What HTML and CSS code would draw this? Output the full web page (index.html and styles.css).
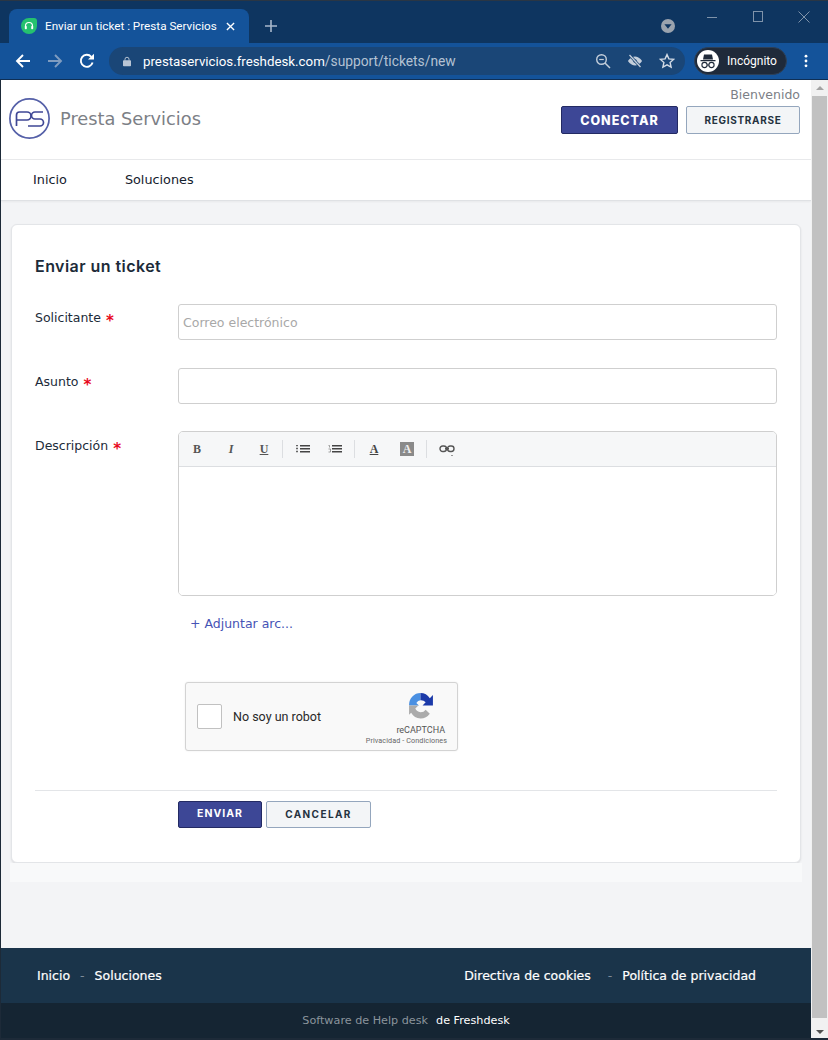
FILE: index.html
```html
<!DOCTYPE html>
<html lang="es">
<head>
<meta charset="utf-8">
<title>Enviar un ticket : Presta Servicios</title>
<link rel="stylesheet" href="styles.css">
</head>
<body>
<div class="window">
  <div class="titlebar">
    <div class="tab">
      <svg class="favicon" viewBox="0 0 16 16"><path d="M8 0h5a3 3 0 0 1 3 3v5a8 8 0 0 1-16 0 8 8 0 0 1 8-8z" fill="#25c16f"/><path d="M4.500 9V8a3.500 3.500 0 0 1 7 0v1" fill="none" stroke="#fff" stroke-width="1.200"/><rect x="3.800" y="8" width="2" height="3.200" rx=".8" fill="#fff"/><rect x="10.200" y="8" width="2" height="3.200" rx=".8" fill="#fff"/></svg>
      <span class="tab-title">Enviar un ticket : Presta Servicios</span>
      <svg class="tab-close" viewBox="0 0 10 10"><path d="M1 1l8 8M9 1l-8 8" stroke="#fff" stroke-width="1.500"/></svg>
    </div>
    <svg class="newtab" viewBox="0 0 12 12"><path d="M6 0v12M0 6h12" stroke="#a9b8cb" stroke-width="1.600"/></svg>
    <div class="spacer"></div>
    <svg class="tabsearch" viewBox="0 0 14 14"><circle cx="7" cy="7" r="7" fill="#9aa3ae"/><path d="M3.400 5.300h7.200L7 9.800z" fill="#0e3560"/></svg>
    <div class="winbtns">
      <svg viewBox="0 0 12 12"><path d="M1 6.500h10" stroke="#7f93aa" stroke-width="1"/></svg>
      <svg viewBox="0 0 12 12"><rect x="1.500" y=".5" width="9" height="10" fill="none" stroke="#7f93aa"/></svg>
      <svg viewBox="0 0 12 12"><path d="M.5 .5l11 11M11.500 .5l-11 11" stroke="#7f93aa"/></svg>
    </div>
  </div>
  <div class="toolbar">
    <svg class="navicon first" viewBox="0 0 16 16"><path d="M15 8H2M8 2L2 8l6 6" fill="none" stroke="#fff" stroke-width="1.900"/></svg>
    <svg class="navicon" viewBox="0 0 16 16"><path d="M1 8h13M8 2l6 6-6 6" fill="none" stroke="#7f9cc0" stroke-width="1.900"/></svg>
    <svg class="navicon" viewBox="0 0 16 16"><path d="M13.600 9.500A6 6 0 1 1 12.300 3.800" fill="none" stroke="#fff" stroke-width="1.900"/><path d="M9 6.500h6V.8z" fill="#fff"/></svg>
    <div class="omnibox">
      <svg class="lock" viewBox="0 0 10 12"><rect y="4.500" width="10" height="7.500" rx="1" fill="#b9c5d4"/><path d="M2.500 5V3.200a2.500 2.500 0 0 1 5 0V5" fill="none" stroke="#b9c5d4" stroke-width="1.200"/></svg>
      <span class="url"><span class="host">prestaservicios.freshdesk.com</span><span class="path">/support/tickets/new</span></span>
      <div class="spacer"></div>
      <svg class="omni-icon" viewBox="0 0 16 16"><circle cx="6.500" cy="6.500" r="4.800" fill="none" stroke="#c3cedb" stroke-width="1.400"/><path d="M10 10l5 5" stroke="#c3cedb" stroke-width="1.500"/><path d="M4.200 6.500h4.600" stroke="#c3cedb" stroke-width="1.200"/></svg>
      <svg class="omni-icon" viewBox="0 0 16 16"><path d="M1 8s2.600-4.500 7-4.500S15 8 15 8s-2.600 4.500-7 4.500S1 8 1 8z" fill="#c3cedb"/><circle cx="8" cy="8" r="1.800" fill="#1a4677"/><path d="M2.500 2l11 12" stroke="#1a4677" stroke-width="2.600"/><path d="M2.500 2l11 12" stroke="#c3cedb" stroke-width="1.300"/></svg>
      <svg class="omni-icon" viewBox="0 0 16 16"><path d="M8 1.600l1.900 4.300 4.700.5-3.500 3.100 1 4.600L8 11.800l-4.100 2.300 1-4.600L1.400 6.400l4.700-.5z" fill="none" stroke="#d3dbe5" stroke-width="1.400"/></svg>
    </div>
    <div class="incognito">
      <span class="inc-badge"><svg viewBox="0 0 20 20"><path d="M2.500 9h15v1.200h-15zM6 3.500h8l1 5H5z" fill="#1f2a3a"/><circle cx="6.500" cy="14" r="2.600" fill="none" stroke="#1f2a3a" stroke-width="1.100"/><circle cx="13.500" cy="14" r="2.600" fill="none" stroke="#1f2a3a" stroke-width="1.100"/><path d="M9 14h2" stroke="#1f2a3a"/></svg></span>
      <span class="inc-label">Incógnito</span>
    </div>
    <svg class="kebab" viewBox="0 0 4 16"><circle cx="2" cy="2.500" r="1.600" fill="#fff"/><circle cx="2" cy="8" r="1.600" fill="#fff"/><circle cx="2" cy="13.500" r="1.600" fill="#fff"/></svg>
  </div>
  <div class="viewport">
    <div class="page">
      <header class="site-header">
        <div class="brand">
          <svg class="logo" viewBox="0 0 41 41"><circle cx="20.500" cy="20.500" r="19.600" fill="none" stroke="#5560a8" stroke-width="1.700"/><path d="M7.500 28V17a3 3 0 0 1 3-3H18a4 4 0 0 1 0 8H8" fill="none" stroke="#3f4795" stroke-width="1.700"/><path d="M34 14H26a3.500 3.500 0 0 0 0 7h5a3.500 3.500 0 0 1 0 7H19" fill="none" stroke="#3f4795" stroke-width="1.700"/></svg>
          <span class="brand-name">Presta Servicios</span>
        </div>
        <div class="auth">
          <div class="welcome">Bienvenido</div>
          <div class="auth-btns">
            <a class="btn btn-primary btn-connect">CONECTAR</a>
            <a class="btn btn-secondary btn-register">REGISTRARSE</a>
          </div>
        </div>
      </header>
      <nav class="site-nav"><a>Inicio</a><a>Soluciones</a></nav>
      <main class="main">
        <section class="card">
          <h1 class="card-title">Enviar un ticket</h1>
          <form class="form">
            <label class="label">Solicitante <span class="req">*</span></label>
            <div class="input placeholder">Correo electrónico</div>
            <label class="label">Asunto <span class="req">*</span></label>
            <div class="input"></div>
            <label class="label">Descripción <span class="req">*</span></label>
            <div class="editor">
              <div class="editor-bar">
                <span class="tool tool-b">B</span>
                <span class="tool tool-i">I</span>
                <span class="tool tool-u">U</span>
                <span class="sep"></span>
                <svg class="tool-svg tool-list" viewBox="0 0 14 8"><path d="M0 .5h2M0 3.500h2M0 6.500h2" stroke="#666" stroke-width="1.500"/><path d="M4 .8h10M4 3.800h10M4 6.800h10" stroke="#444" stroke-width="1.500"/></svg>
                <svg class="tool-svg" viewBox="0 0 14 8"><path d="M.5 .5h1v2M.5 4h2v3h-2" stroke="#777" stroke-width=".7" fill="none"/><path d="M4 .8h10M4 3.800h10M4 6.800h10" stroke="#444" stroke-width="1.500"/></svg>
                <span class="sep"></span>
                <span class="tool tool-a">A</span>
                <span class="tool tool-bg">A</span>
                <span class="sep"></span>
                <svg class="tool-link" viewBox="0 0 16 12"><rect x="1" y="1" width="6.500" height="5.500" rx="2.700" fill="none" stroke="#555" stroke-width="1.400"/><rect x="8.500" y="1" width="6.500" height="5.500" rx="2.700" fill="none" stroke="#555" stroke-width="1.400"/><path d="M6 3.750h4" stroke="#555" stroke-width="1.400"/><path d="M12 10.500h2" stroke="#999"/></svg>
              </div>
              <div class="editor-body"></div>
            </div>
            <a class="attach">+ Adjuntar arc...</a>
            <div class="recaptcha">
              <span class="rc-box"></span>
              <span class="rc-text">No soy un robot</span>
              <div class="rc-side">
                <svg class="rc-logo" viewBox="2 1 25 27"><path d="M3 13A11 11 0 0 1 14 2V9A5 5 0 0 0 10 11.500L12.500 14H3Z" fill="#4a90e2"/><path d="M14 2A11 11 0 0 1 23 7L26 4V14H16L19 11A6 6 0 0 0 14 9Z" fill="#1c3aa9"/><path d="M3 14H12L9 17A6 6 0 0 0 14 20.500A6 6 0 0 0 19 18L23 22A11 11 0 0 1 14 26.500A11 11 0 0 1 5 21L3 23Z" fill="#ababab"/></svg>
                <span class="rc-brand">reCAPTCHA</span>
                <span class="rc-links">Privacidad - Condiciones</span>
              </div>
            </div>
            <div class="actions">
              <a class="btn btn-primary btn-send">ENVIAR</a>
              <a class="btn btn-secondary btn-cancel">CANCELAR</a>
            </div>
          </form>
        </section>
        <div class="card-shadow"></div>
      </main>
      <footer class="footer">
        <div class="footer-top">
          <div class="footer-links"><a>Inicio</a><span class="dash">-</span><a>Soluciones</a></div>
          <div class="footer-links footer-legal"><a>Directiva de cookies</a><span class="dash">-</span><a>Política de privacidad</a></div>
        </div>
        <div class="footer-bottom"><span class="muted">Software de Help desk</span><span>de Freshdesk</span></div>
      </footer>
    </div>
    <div class="scrollbar">
      <span class="arrow up"></span>
      <span class="thumb"></span>
      <span class="arrow down"></span>
    </div>
  </div>
</div>
</body>
</html>
```

FILE: styles.css
```css
* { box-sizing: border-box; }
html, body { margin: 0; height: 100%; }
body { font-family: "DejaVu Sans", sans-serif; overflow: hidden; background: #0c3461; }
.window { width: 828px; height: 1040px; display: flex; flex-direction: column; border-bottom: 2px solid #1d2a38; overflow: hidden; }
.spacer { flex: 1; }

.titlebar { height: 43px; flex: none; background: #0e3560; border-top: 1px solid #2a3644; display: flex; align-items: flex-start; padding-left: 9px; }
.tab { width: 240px; height: 34px; margin-top: 8px; background: #14539a; border-radius: 8px 8px 0 0; display: flex; align-items: center; padding: 0 12px; gap: 8px; }
.favicon { width: 16px; height: 16px; flex: none; }
.tab-title { font: 11.700px "Roboto", sans-serif; color: #fff; white-space: nowrap; flex: 1; }
.tab-close { width: 9px; height: 9px; flex: none; margin-right: 2px; }
.newtab { width: 12px; height: 12px; margin: 19px 0 0 16px; }
.tabsearch { width: 14px; height: 14px; margin: 18px 0 0; }
.winbtns { display: flex; margin: 10px 18px 0 31px; gap: 34px; }
.winbtns svg { width: 12px; height: 12px; }

.toolbar { height: 37px; flex: none; background: #14539a; display: flex; align-items: center; padding-left: 15px; border-bottom: 1px solid #0f2f55; }
.navicon { width: 16px; height: 16px; margin-right: 16px; flex: none; }
.omnibox { width: 576px; height: 28px; margin-left: -2px; background: #1a4677; border-radius: 14px; display: flex; align-items: center; padding: 0 10px 0 14px; }
.lock { width: 8px; height: 11px; flex: none; }
.url { font: 13.300px "Roboto", sans-serif; margin-left: 12px; white-space: nowrap; }
.host { color: #fff; }
.path { color: #b4c2d3; font-size: 13.800px; }
.omni-icon { width: 16px; height: 16px; margin-left: 16px; flex: none; }
.incognito { width: 93px; height: 28px; margin-left: 9px; background: #1f2a3a; border: 1px solid #2d4058; border-radius: 14px; display: flex; align-items: center; padding-left: 2px; gap: 8px; flex: none; }
.inc-badge { width: 22px; height: 22px; border-radius: 50%; background: #fff; display: flex; align-items: center; justify-content: center; flex: none; }
.inc-badge svg { width: 20px; height: 20px; }
.inc-label { font: 12px "Roboto", sans-serif; color: #fff; }
.kebab { width: 4px; height: 14px; margin-left: 17px; flex: none; }

.viewport { flex: 1; min-height: 0; display: flex; border-left: 1px solid #1d2a38; }
.page { flex: 1; min-width: 0; display: flex; flex-direction: column; background: #f3f4f6; }
.scrollbar { width: 17px; flex: none; background: #f1f1f1; display: flex; flex-direction: column; align-items: center; }
.arrow { width: 0; height: 0; border-left: 4px solid transparent; border-right: 4px solid transparent; flex: none; }
.arrow.up { border-bottom: 4px solid #a3a3a3; margin: 6px 0; }
.arrow.down { border-top: 4px solid #505050; margin: 12px 0 4px; }
.thumb { width: 15px; flex: 1; background: #c1c1c1; }

.site-header { height: 80px; flex: none; background: #fff; border-bottom: 1px solid #e8e9eb; display: flex; justify-content: space-between; padding: 0 11px 3px 8px; }
.brand { display: flex; align-items: center; gap: 10px; }
.logo { width: 41px; height: 41px; flex: none; }
.brand-name { font: 17.800px "DejaVu Sans", sans-serif; color: #7c8086; }
.auth { display: flex; flex-direction: column; align-items: flex-end; padding-top: 6px; }
.welcome { font-size: 12.500px; line-height: 18px; color: #7c8086; }
.auth-btns { display: flex; gap: 8px; margin-top: 2px; }
.btn { display: flex; align-items: center; justify-content: center; border-radius: 2px; font-family: "Inter", sans-serif; font-weight: 800; white-space: nowrap; }
.btn-primary { background: #3d4796; border: 1px solid #232a63; color: #fff; }
.btn-secondary { background: #f3f5f7; border: 1px solid #94a6bd; color: #25323f; }
.btn-connect { width: 117px; height: 28px; font-size: 12.500px; letter-spacing: 1px; }
.btn-register { width: 114px; height: 28px; font-size: 10px; letter-spacing: .7px; font-weight: 700; }
.btn-send { width: 84px; height: 27px; padding-bottom: 2px; font-size: 10.500px; letter-spacing: 1px; font-weight: 700; }
.btn-cancel { width: 105px; height: 27px; padding-bottom: 2px; font-size: 10px; letter-spacing: 1.400px; font-weight: 700; }

.site-nav { height: 41px; flex: none; background: #fff; border-bottom: 1px solid #dfe1e4; box-shadow: 0 1px 2px rgba(0,0,0,.05); display: flex; align-items: center; padding: 0 0 2px 32px; gap: 58px; font-size: 12.800px; color: #14202c; }

.main { flex: 1; padding: 23px 10px 0 9px; display: flex; flex-direction: column; }
.card { height: 639px; flex: none; background: #fff; border: 1px solid #e3e5e8; border-radius: 6px; box-shadow: 0 1px 2px rgba(0,0,0,.1); margin: 0 0 0 1px; padding: 31px 24px 0 23px; }
.card-shadow { height: 19px; background: #f8f9fa; margin: 0 -1px 0 0; flex: none; }
.card-title { margin: 0; font: 600 16px/20px "Inter", sans-serif; letter-spacing: .45px; color: #1c2b39; }
.form { display: grid; grid-template-columns: 143px 599px; margin-top: 28px; align-items: start; }
.label { font-size: 12.500px; line-height: 18px; color: #1c2b39; padding-top: 5px; }
.req { color: #e8091e; font-size: 15px; font-weight: 700; line-height: 10px; margin-left: 1px; vertical-align: -4px; }
.input { height: 36px; border: 1px solid #cfcfcf; border-radius: 3px; background: #fff; margin-bottom: 28px; padding: 0 4px; display: flex; align-items: center; font-size: 12.500px; }
.placeholder { color: #a8a8a8; }
.editor { grid-column: 2; height: 165px; border: 1px solid #cfcfcf; border-radius: 5px; overflow: hidden; margin-top: -1px; display: flex; flex-direction: column; }
.editor-bar { height: 35px; flex: none; background: #f6f7f8; border-bottom: 1px solid #dcdee1; display: flex; align-items: center; padding-left: 13px; }
.tool { width: 10px; font-family: "Liberation Serif", serif; font-size: 12px; font-weight: 700; color: #555; line-height: 14px; text-align: center; margin-right: 24px; }
.tool-i { font-style: italic; margin-right: 23px; }
.tool-u { text-decoration: underline; margin-right: 13px; }
.sep { width: 1px; height: 18px; background: #dcdee1; margin-right: 14px; }
.tool-svg { width: 14px; height: 8px; margin-right: 12px; }
.tool-list { margin-right: 18px; margin-left: -1px; }
.tool-a { text-decoration: underline; color: #444; margin-right: 21px; }
.tool-bg { width: 14px; background: #8a8a8a; color: #eee; margin-right: 12px; }
.tool-link { width: 16px; height: 12px; margin: 4px 0 0 -2px; }
.editor-body { flex: 1; background: #fff; }
.attach { grid-column: 2; margin: 19px 0 0 12px; font-size: 12.500px; line-height: 18px; color: #4653b5; }
.recaptcha { grid-column: 2; margin: 49px 0 0 7px; width: 273px; height: 69px; background: #f9f9f9; border: 1px solid #d3d3d3; border-radius: 3px; box-shadow: 0 0 2px rgba(0,0,0,.08); display: flex; align-items: center; padding-left: 11px; }
.rc-box { width: 25px; height: 25px; background: #fff; border: 1px solid #c1c1c1; border-radius: 2px; flex: none; }
.rc-text { font: 12.500px "Roboto", sans-serif; color: #282828; margin-left: 11px; }
.rc-side { margin-left: auto; margin-right: 10px; display: flex; flex-direction: column; align-items: flex-end; align-self: flex-start; padding-top: 9px; }
.rc-logo { width: 28px; height: 28px; margin-right: 12px; }
.rc-brand { font: 9px/11px "Roboto", sans-serif; color: #555; margin-top: 5px; margin-right: 2px; }
.rc-links { font: 7.200px/9px "Roboto", sans-serif; color: #666; letter-spacing: .1px; }
.actions { grid-column: 1 / span 2; margin-top: 39px; border-top: 1px solid #e3e5e8; padding: 10px 0 0 143px; display: flex; gap: 4px; }

.footer { margin-top: auto; flex: none; }
.footer-top { height: 55px; background: #1a344a; display: flex; align-items: center; padding: 0 55px 0 36px; justify-content: space-between; }
.footer-links { display: flex; gap: 10px; font-size: 12.500px; color: #fff; -webkit-text-stroke: .2px #fff; }
.dash { color: #7d8b99; -webkit-text-stroke: 0; }
.footer-legal .dash { margin-left: 7px; }
.footer-bottom { height: 35px; background: #152533; display: flex; align-items: center; justify-content: center; gap: 8px; font-size: 11.200px; color: #fff; }
.muted { color: #8b949c; }
```
